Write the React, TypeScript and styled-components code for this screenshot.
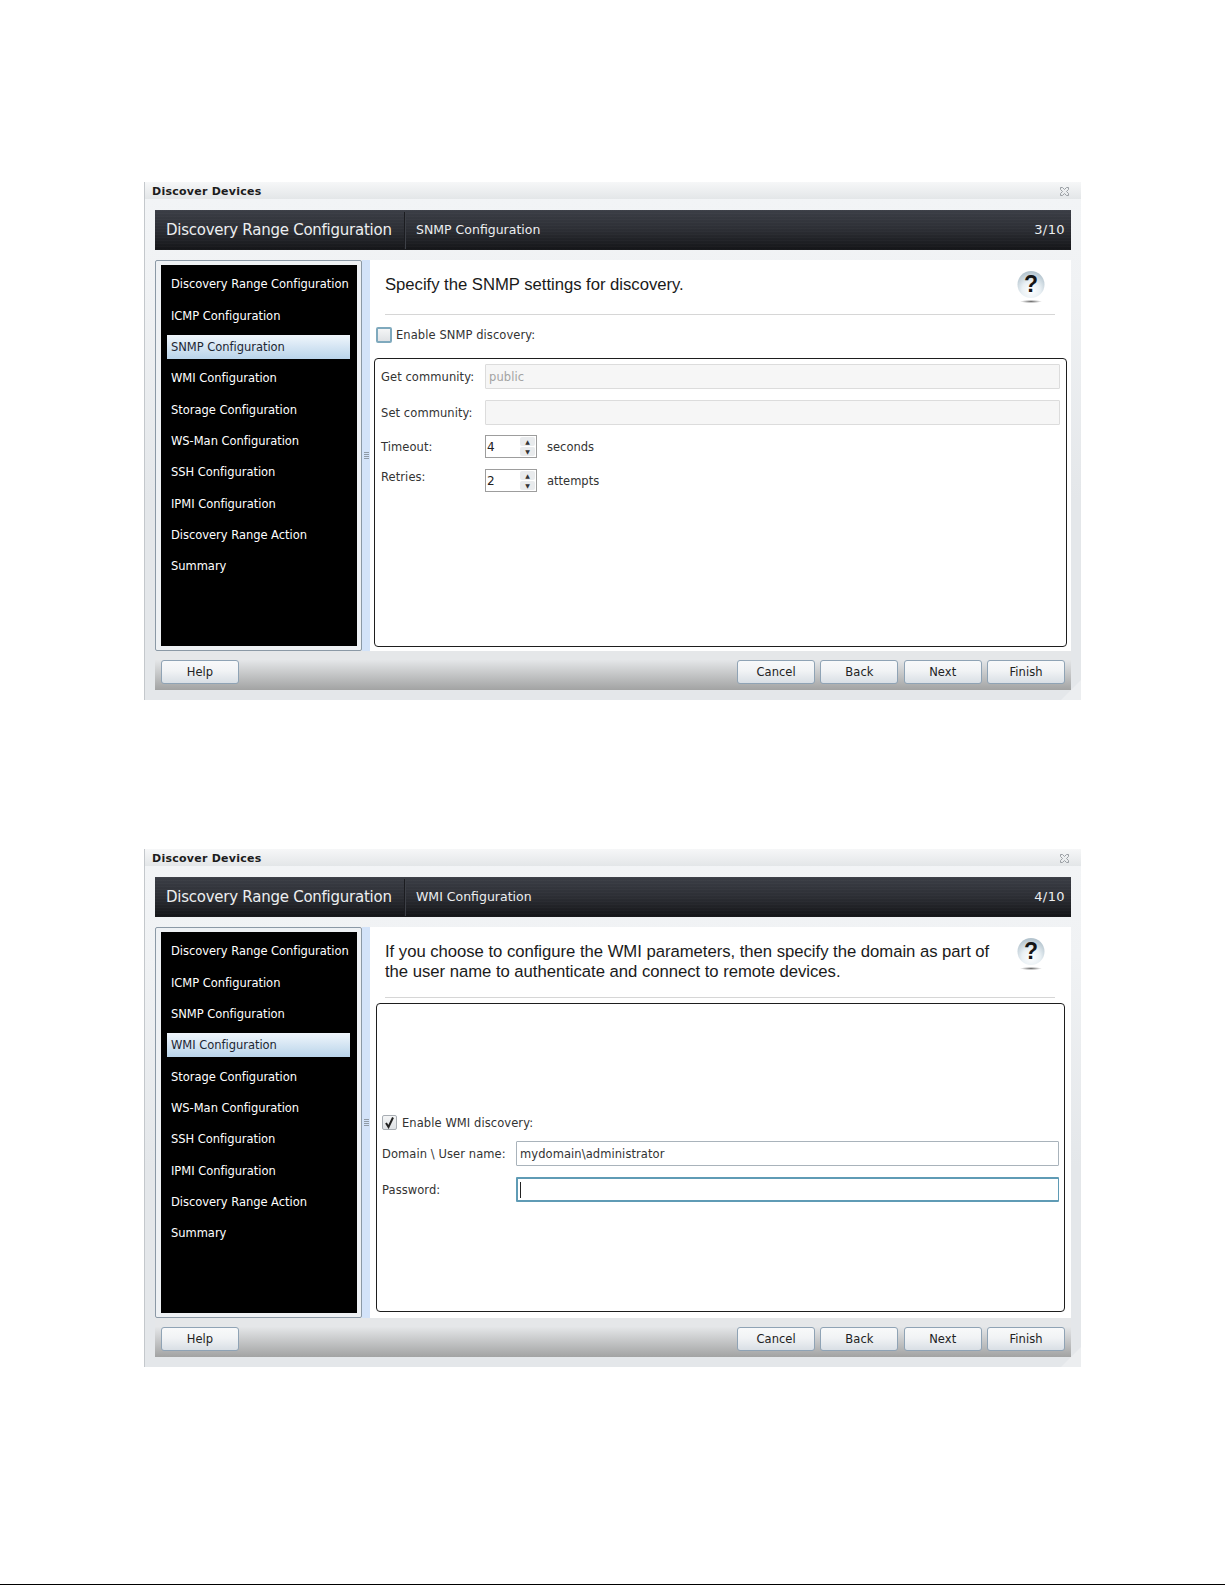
import React from "react";
import styled, { createGlobalStyle } from "styled-components";

const Global = createGlobalStyle`
  html, body { margin: 0; padding: 0; background: #fff; }
  body { font-family: "DejaVu Sans", Verdana, sans-serif; }
`;

const Page = styled.div`
  height: 1585px;
  box-sizing: border-box;
  padding: 182px 0 0 144px;
  display: flex;
  flex-direction: column;
  gap: 149px;
  position: relative;
`;

const BottomRule = styled.div`
  position: absolute;
  left: 0;
  right: 0;
  bottom: 0;
  height: 1px;
  background: #000;
`;

const Dialog = styled.section`
  width: 937px;
  height: 518px;
  flex: none;
  display: flex;
  flex-direction: column;
  background: #f1f3f5;
  border-left: 1px solid #c4c8cc;
  box-sizing: border-box;
  position: relative;
`;

const TitleBar = styled.div`
  height: 17px;
  flex: none;
  display: flex;
  align-items: center;
  justify-content: space-between;
  padding: 1px 11px 0 7px;
  box-sizing: border-box;
  background: linear-gradient(#f6f7f8, #e3e6e8);
  font-size: 11px;
  font-weight: 700;
  color: #1c1c1c;
  letter-spacing: 0.25px;
`;

const Main = styled.div`
  flex: 1;
  min-height: 0;
  display: flex;
  flex-direction: column;
  padding: 11px 10px 10px 10px;
  background: linear-gradient(#f2f4f6 0, #f0f2f4 90px, #e4e7ea 300px);
`;

const Header = styled.header`
  height: 40px;
  flex: none;
  display: flex;
  align-items: center;
  color: #eceef0;
  background:
    repeating-linear-gradient(0deg, rgba(255,255,255,0.018) 0 1px, transparent 1px 3px),
    linear-gradient(#3b3e46, #2c2e34 50%, #141518);
  margin-bottom: 10px;
`;

const HeaderTitle = styled.div`
  font-size: 15px;
  letter-spacing: -0.25px;
  padding: 0 11px;
  line-height: 37px;
  border-right: 1px solid #1b1c20;
  box-shadow: 1px 0 0 #3d4047;
  width: 250px;
  box-sizing: border-box;
  white-space: nowrap;
`;

const HeaderSub = styled.div`
  flex: 1;
  font-size: 12.5px;
  padding: 0 0 2px 11px;
  letter-spacing: 0;
`;

const HeaderStep = styled.div`
  font-size: 13px;
  letter-spacing: 0.4px;
  padding: 0 6px 2px 0;
`;

const Middle = styled.div`
  height: 391px;
  flex: none;
  display: flex;
`;

const Side = styled.nav`
  width: 207px;
  flex: none;
  box-sizing: border-box;
  border: 1px solid #8b99a6;
  border-radius: 2px;
  padding: 4px 4px 4px 5px;
  background: #eef1f4;
`;

const SideInner = styled.ul`
  margin: 0;
  height: 100%;
  box-sizing: border-box;
  list-style: none;
  background: #000;
  padding: 7.4px 7px 0 6px;
`;

const SideItem = styled.li<{ $active?: boolean }>`
  height: 24px;
  margin-bottom: 7.33px;
  line-height: 24px;
  padding-left: 4px;
  font-size: 11.5px;
  letter-spacing: -0.03px;
  white-space: nowrap;
  color: ${(p) => (p.$active ? "#1d2733" : "#fff")};
  background: ${(p) => (p.$active ? "linear-gradient(#f0f6fc, #b9d4ea)" : "transparent")};
`;

const Splitter = styled.div`
  width: 8px;
  flex: none;
  background: #d3e3f9;
  display: flex;
  flex-direction: column;
  justify-content: center;
  align-items: center;
  gap: 1px;
`;

const Grip = styled.i`
  display: block;
  width: 5px;
  height: 1px;
  background: #8f9aa6;
`;

const Content = styled.div`
  flex: 1;
  min-width: 0;
  background: #fff;
  display: flex;
  flex-direction: column;
`;

const Intro = styled.div<{ $h: number }>`
  height: ${(p) => p.$h}px;
  flex: none;
  box-sizing: border-box;
  margin: 0 16px 0 15px;
  padding-top: 15px;
  border-bottom: 1px solid #d6d6d6;
  display: flex;
  justify-content: space-between;
  font-family: "Liberation Sans", Arial, sans-serif;
  font-size: 16.7px;
  line-height: 20px;
  color: #1a1a1a;
  letter-spacing: -0.03px;
`;

const IntroText = styled.p`
  margin: 0;
  width: 620px;
`;

const HelpIcon = styled.svg`
  flex: none;
  margin: -5px 9px 0 0;
`;

const EnableRow = styled.label<{ $ml: number; $gap: number }>`
  display: flex;
  align-items: center;
  gap: ${(p) => p.$gap}px;
  margin-left: ${(p) => p.$ml}px;
  font-size: 11.5px;
  letter-spacing: 0.08px;
  color: #333;
`;

const TopEnable = styled.div`
  height: 43px;
  flex: none;
  display: flex;
  align-items: center;
  padding-bottom: 4px;
  box-sizing: border-box;
`;

const Check = styled.span<{ $on?: boolean; $size: number }>`
  width: ${(p) => p.$size}px;
  height: ${(p) => p.$size}px;
  box-sizing: border-box;
  flex: none;
  border: ${(p) => (p.$on ? "1px solid #a8adb3" : "2px solid #7fa9bd")};
  border-radius: 2px;
  background: linear-gradient(#f4f5f6, #dfe2e5);
  display: flex;
  align-items: center;
  justify-content: center;
`;

const Box = styled.div<{ $top?: number; $center?: boolean; $l: number; $end: number }>`
  flex: 1;
  min-height: 0;
  margin: ${(p) => p.$top ?? 0}px ${(p) => p.$end}px ${(p) => p.$end}px ${(p) => p.$l}px;
  border: 1px solid #1e1e1e;
  border-radius: 4px;
  background: #fff;
  box-sizing: border-box;
  display: flex;
  flex-direction: column;
  padding: ${(p) => (p.$center ? "2px 5px 0 5px" : "5px 6px 0 6px")};
  justify-content: ${(p) => (p.$center ? "center" : "flex-start")};
`;

const FormRow = styled.div<{ $h: number; $mb: number }>`
  display: flex;
  align-items: center;
  height: ${(p) => p.$h}px;
  margin-bottom: ${(p) => p.$mb}px;
  font-size: 11.5px;
  letter-spacing: 0.08px;
  color: #333;
`;

const FieldLabel = styled.span<{ $w: number; $raised?: boolean }>`
  width: ${(p) => p.$w}px;
  flex: none;
  padding-bottom: ${(p) => (p.$raised ? 8 : 0)}px;
`;

const TextField = styled.div<{ $disabled?: boolean; $focus?: boolean }>`
  flex: 1;
  height: 100%;
  box-sizing: border-box;
  display: flex;
  align-items: center;
  padding-left: 3px;
  border: 1px solid ${(p) => (p.$disabled ? "#dcdcdc" : p.$focus ? "#5f9bb5" : "#a9b3bb")};
  ${(p) => p.$focus && "border-width: 2px 1px 2px 2px; padding-left: 2px;"}
  border-radius: 1px;
  background: ${(p) => (p.$disabled ? "#f6f6f6" : "#fff")};
  color: ${(p) => (p.$disabled ? "#a3a3a3" : "#333")};
`;

const Caret = styled.i`
  display: block;
  width: 1px;
  height: 16px;
  background: #222;
`;

const Spinner = styled.div`
  width: 52px;
  height: 100%;
  flex: none;
  box-sizing: border-box;
  border: 1px solid #9d9d9d;
  display: flex;
  align-items: center;
  justify-content: space-between;
  padding: 0 1px 0 1px;
  color: #222;
  font-size: 12px;
`;

const SpinBtns = styled.div`
  width: 15px;
  display: flex;
  flex-direction: column;
  gap: 1px;
`;

const SpinBtn = styled.div`
  height: 9px;
  background: #e9ebed;
  border-radius: 2px;
  display: flex;
  align-items: center;
  justify-content: center;
  color: #333;
  font-size: 6px;
  line-height: 1;
`;

const Unit = styled.span`
  margin-left: 10px;
  letter-spacing: 0;
`;

const Footer = styled.footer`
  height: 39px;
  flex: none;
  display: flex;
  align-items: center;
  justify-content: space-between;
  padding: 2px 6px 0 6px;
  box-sizing: border-box;
  background: linear-gradient(#e5e7e9 0, #e5e7e9 22%, #a2a3a3 100%);
`;

const BtnGroup = styled.div`
  display: flex;
  gap: 5.3px;
`;

const Button = styled.button`
  width: 78px;
  height: 24px;
  padding: 0;
  border: 1px solid #8fa3b5;
  border-radius: 3px;
  background: linear-gradient(#f8f9fa, #f1f3f5 45%, #d9dfe5);
  font-family: "DejaVu Sans", Verdana, sans-serif;
  font-size: 11.5px;
  letter-spacing: 0.05px;
  color: #222;
`;

const ResizeCorner = styled.svg`
  position: absolute;
  right: 0;
  bottom: 0;
`;

const NAV = [
  "Discovery Range Configuration",
  "ICMP Configuration",
  "SNMP Configuration",
  "WMI Configuration",
  "Storage Configuration",
  "WS-Man Configuration",
  "SSH Configuration",
  "IPMI Configuration",
  "Discovery Range Action",
  "Summary",
];

const CloseGlyph = () => (
  <svg width="11" height="11" viewBox="0 0 11 11" fill="none" stroke="#9a9fa4" strokeWidth="1">
    <path d="M1.5 1.5h2l2 2 2-2h2v2l-2 2 2 2v2h-2l-2-2-2 2h-2v-2l2-2-2-2z" />
  </svg>
);

const Help = ({ id }: { id: string }) => (
  <HelpIcon width="30" height="36" viewBox="0 0 30 36">
    <defs>
      <radialGradient id={id} cx="0.5" cy="0.72" r="0.68">
        <stop offset="0" stopColor="#ffffff" />
        <stop offset="0.5" stopColor="#e9f0f4" />
        <stop offset="1" stopColor="#b4c4ce" />
      </radialGradient>
      <radialGradient id={`${id}s`}>
        <stop offset="0" stopColor="#6f6f6f" />
        <stop offset="1" stopColor="#fff" />
      </radialGradient>
    </defs>
    <circle cx="15" cy="14.5" r="13.5" fill={`url(#${id})`} />
    <ellipse cx="15" cy="31.5" rx="11" ry="1.6" fill={`url(#${id}s)`} />
    <text
      x="15"
      y="22"
      textAnchor="middle"
      fontFamily="'Liberation Sans', Arial, sans-serif"
      fontWeight="700"
      fontSize="23"
      fill="#151515"
    >
      ?
    </text>
  </HelpIcon>
);

const CheckMark = () => (
  <svg width="13" height="13" viewBox="0 0 13 13" fill="none" stroke="#222" strokeWidth="2">
    <path d="M3 7l2.5 4L10 1.5" />
  </svg>
);

const SpinField = ({ value }: { value: string }) => (
  <Spinner>
    {value}
    <SpinBtns>
      <SpinBtn>▲</SpinBtn>
      <SpinBtn>▼</SpinBtn>
    </SpinBtns>
  </Spinner>
);

type WizardProps = {
  sub: string;
  step: string;
  active: number;
  helpId: string;
  introHeight: number;
  intro: React.ReactNode;
  children: React.ReactNode;
};

const Wizard = ({ sub, step, active, helpId, introHeight, intro, children }: WizardProps) => (
  <Dialog>
    <TitleBar>
      <span>Discover Devices</span>
      <CloseGlyph />
    </TitleBar>
    <Main>
      <Header>
        <HeaderTitle>Discovery Range Configuration</HeaderTitle>
        <HeaderSub>{sub}</HeaderSub>
        <HeaderStep>{step}</HeaderStep>
      </Header>
      <Middle>
        <Side>
          <SideInner>
            {NAV.map((n, i) => (
              <SideItem key={n} $active={i === active}>
                {n}
              </SideItem>
            ))}
          </SideInner>
        </Side>
        <Splitter>
          <Grip />
          <Grip />
          <Grip />
          <Grip />
        </Splitter>
        <Content>
          <Intro $h={introHeight}>
            <IntroText>{intro}</IntroText>
            <Help id={helpId} />
          </Intro>
          {children}
        </Content>
      </Middle>
      <Footer>
        <Button>Help</Button>
        <BtnGroup>
          <Button>Cancel</Button>
          <Button>Back</Button>
          <Button>Next</Button>
          <Button>Finish</Button>
        </BtnGroup>
      </Footer>
    </Main>
    <ResizeCorner width="20" height="20" viewBox="0 0 20 20">
      <path d="M20 0V20H0Z" fill="#eceef0" />
    </ResizeCorner>
  </Dialog>
);

export default function App() {
  return (
    <Page>
      <Global />
      <Wizard
        sub="SNMP Configuration"
        step="3/10"
        active={2}
        helpId="h1"
        introHeight={55}
        intro="Specify the SNMP settings for discovery."
      >
        <TopEnable>
          <EnableRow $ml={6} $gap={4}>
            <Check $size={16} />
            Enable SNMP discovery:
          </EnableRow>
        </TopEnable>
        <Box $l={4} $end={4}>
          <FormRow $h={25} $mb={11}>
            <FieldLabel $w={104}>Get community:</FieldLabel>
            <TextField $disabled>public</TextField>
          </FormRow>
          <FormRow $h={25} $mb={10}>
            <FieldLabel $w={104}>Set community:</FieldLabel>
            <TextField $disabled />
          </FormRow>
          <FormRow $h={23} $mb={11}>
            <FieldLabel $w={104}>Timeout:</FieldLabel>
            <SpinField value="4" />
            <Unit>seconds</Unit>
          </FormRow>
          <FormRow $h={23} $mb={0}>
            <FieldLabel $w={104} $raised>
              Retries:
            </FieldLabel>
            <SpinField value="2" />
            <Unit>attempts</Unit>
          </FormRow>
        </Box>
      </Wizard>
      <Wizard
        sub="WMI Configuration"
        step="4/10"
        active={3}
        helpId="h2"
        introHeight={71}
        intro="If you choose to configure the WMI parameters, then specify the domain as part of the user name to authenticate and connect to remote devices."
      >
        <Box $l={6} $top={5} $end={6} $center>
          <FormRow $h={15} $mb={11}>
            <EnableRow $ml={0} $gap={5}>
              <Check $on $size={15}>
                <CheckMark />
              </Check>
              Enable WMI discovery:
            </EnableRow>
          </FormRow>
          <FormRow $h={25} $mb={11}>
            <FieldLabel $w={134}>Domain \ User name:</FieldLabel>
            <TextField>mydomain\administrator</TextField>
          </FormRow>
          <FormRow $h={25} $mb={0}>
            <FieldLabel $w={134}>Password:</FieldLabel>
            <TextField $focus>
              <Caret />
            </TextField>
          </FormRow>
        </Box>
      </Wizard>
      <BottomRule />
    </Page>
  );
}
